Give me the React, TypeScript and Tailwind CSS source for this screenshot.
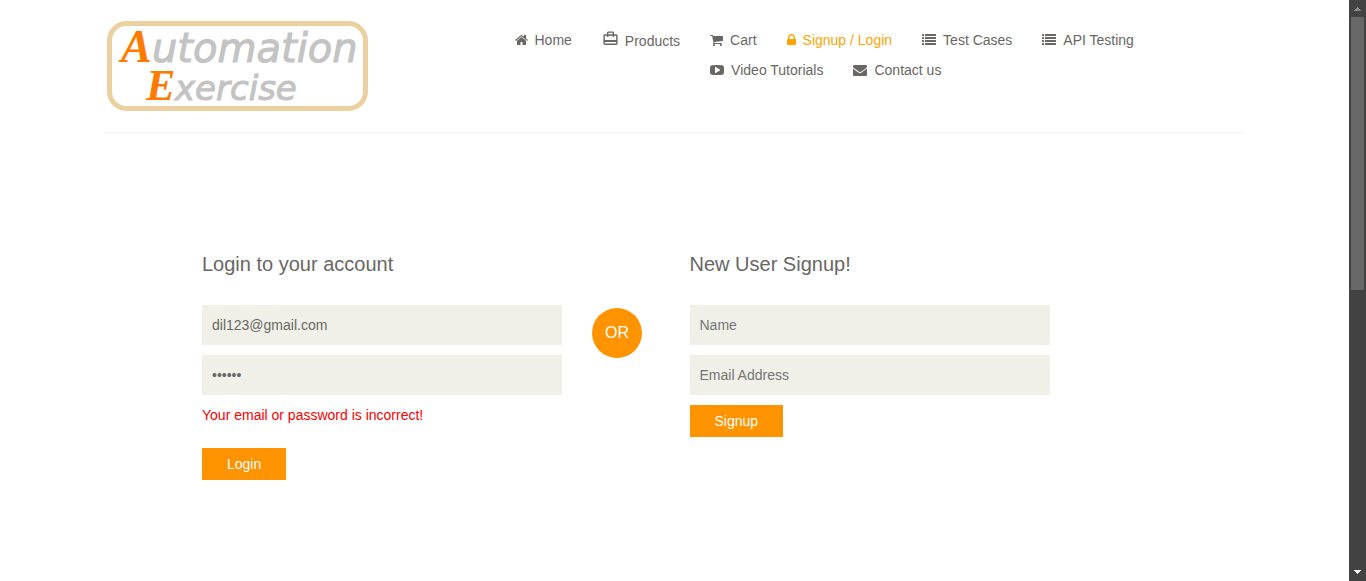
import React from "react";
import { MdCardTravel } from "react-icons/md";

type GlyphProps = { className: string; viewBox?: string; children: React.ReactNode };

function Glyph({ className, viewBox = "0 0 1792 1792", children }: GlyphProps) {
  return (
    <svg viewBox={viewBox} className={`${className} shrink-0`} fill="currentColor" aria-hidden="true">
      {children}
    </svg>
  );
}

const HomeIcon = () => (
  <Glyph className="h-3.5 w-[13px]" viewBox="64 0 1664 1792">
    <path d="M1472 992v480q0 26-19 45t-45 19h-384v-384h-256v384h-384q-26 0-45-19t-19-45v-480q0-1 .5-3t.5-3l575-474 575 474q1 2 1 6zm223-69l-62 74q-8 9-21 11h-3q-13 0-21-7l-692-577-692 577q-12 8-24 7-13-2-21-11l-62-74q-8-10-7-23.5t11-21.5l719-599q32-26 76-26t76 26l244 204v-195q0-14 9-23t23-9h192q14 0 23 9t9 23v408l219 182q10 8 11 21.5t-7 23.5z" />
  </Glyph>
);

const CartIcon = () => (
  <Glyph className="h-3.5 w-[13px]" viewBox="64 0 1664 1792">
    <path d="M704 1536q0 52-38 90t-90 38-90-38-38-90 38-90 90-38 90 38 38 90zm896 0q0 52-38 90t-90 38-90-38-38-90 38-90 90-38 90 38 38 90zm128-1088v512q0 24-16.5 42.5t-40.5 21.5l-1044 122q13 60 13 70 0 16-24 64h920q26 0 45 19t19 45-19 45-45 19h-1024q-26 0-45-19t-19-45q0-11 8-31.5t16-36 21.5-40 15.5-29.5l-177-823h-204q-26 0-45-19t-19-45 19-45 45-19h256q16 0 28.5 6.5t19.5 15.5 13 24.5 8 26 5.5 29.5 4.5 26h1201q26 0 45 19t19 45z" />
  </Glyph>
);

const LockIcon = () => (
  <Glyph className="h-3.5 w-[9px]" viewBox="320 0 1152 1792">
    <path d="M640 768h512v-192q0-106-75-181t-181-75-181 75-75 181v192zm832 96v576q0 40-28 68t-68 28h-960q-40 0-68-28t-28-68v-576q0-40 28-68t68-28h32v-192q0-184 132-316t316-132 316 132 132 316v192h32q40 0 68 28t28 68z" />
  </Glyph>
);

const ListIcon = () => (
  <Glyph className="size-3.5">
    {[128, 512, 896, 1280].map((y) => (
      <React.Fragment key={y}>
        <rect x="0" y={y} width="256" height="256" rx="32" />
        <rect x="384" y={y} width="1408" height="256" rx="32" />
      </React.Fragment>
    ))}
  </Glyph>
);

const VideoIcon = () => (
  <Glyph className="size-3.5">
    <path d="M1280 896q0-37-30-54l-512-320q-31-20-65-2-33 18-33 56v640q0 38 33 56 16 8 31 8 20 0 34-10l512-320q30-17 30-54zm512 0q0 96-1 150t-8.5 136.5-22.5 147.5q-16 73-69 123t-124 58q-222 25-671 25t-671-25q-71-8-124.5-58t-69.5-123q-14-65-21.5-147.5t-8.5-136.5-1-150 1-150 8.5-136.5 22.5-147.5q16-73 69-123t124-58q222-25 671-25t671 25q71 8 124.5 58t69.5 123q14 65 21.5 147.5t8.5 136.5 1 150z" />
  </Glyph>
);

const MailIcon = () => (
  <Glyph className="size-3.5">
    <path d="M1792 710v794q0 66-47 113t-113 47h-1472q-66 0-113-47t-47-113v-794q44 49 101 87 362 246 497 345 57 42 92.5 65.5t94.5 48 110 24.5h2q51 0 110-24.5t94.5-48 92.5-65.5q170-123 498-345 57-39 100-87zm0-294q0 79-49 151t-122 123q-376 261-468 325-10 7-42.5 31t-54 38.5-52 32.5-57.5 27-50 9h-2q-23 0-50-9t-57.5-27-52-32.5-54-38.5-42.5-31q-91-64-262-182.5t-205-142.5q-62-42-117-115.5t-55-136.5q0-78 41.5-130t118.5-52h1472q65 0 112.5 47t47.5 113z" />
  </Glyph>
);

const wrappingLinks = [
  { label: "Cart", Icon: CartIcon },
  { label: "Signup / Login", Icon: LockIcon, active: true },
  { label: "Test Cases", Icon: ListIcon },
  { label: "API Testing", Icon: ListIcon },
  { label: "Video Tutorials", Icon: VideoIcon },
  { label: "Contact us", Icon: MailIcon },
];

function Logo() {
  return (
    <a href="#home" className="ml-0.5 block w-[262px]">
      <svg viewBox="0 0 262 90" className="block h-auto w-full overflow-visible" role="img" aria-label="Automation Exercise">
        <rect x="2.5" y="2.5" width="256" height="85" rx="17" fill="none" stroke="#ebd0a0" strokeWidth="5" />
        <g fontStyle="italic" fill="#c3c3c3" stroke="#c3c3c3" strokeWidth="1" fontFamily="'DejaVu Sans', sans-serif" fontSize="40">
          <text x="14" y="41">
            <tspan fill="#ff7b00" stroke="none" fontFamily="'Liberation Serif', serif" fontWeight="bold" fontSize="46">A</tspan>
            <tspan x="45">utomation</tspan>
          </text>
          <text x="39" y="79">
            <tspan fill="#ff7b00" stroke="none" fontFamily="'Liberation Serif', serif" fontWeight="bold" fontSize="44">E</tspan>
            <tspan x="68" fontSize="34">xercise</tspan>
          </text>
        </g>
      </svg>
    </a>
  );
}

function Field({ label, ...rest }: { label: string } & React.InputHTMLAttributes<HTMLInputElement>) {
  return (
    <input
      aria-label={label}
      placeholder={label}
      className="mb-2.5 block h-10 w-full bg-[#f0f0e9] px-2.5 text-sm text-[#696763] outline-none placeholder:text-[#757575]"
      {...rest}
    />
  );
}

function SubmitButton({ children }: { children: React.ReactNode }) {
  return (
    <button type="submit" className="block h-8 bg-[#ff9300] px-[25px] text-sm font-medium text-white">
      {children}
    </button>
  );
}

function Header() {
  return (
    <header className="mx-auto w-full max-w-[1170px] px-[15px]">
      <div className="flex items-start border-b border-[#f5f5f5] pt-[21px] pb-[21px]">
        <div className="w-1/3 shrink-0">
          <Logo />
        </div>
        <nav className="flex grow items-start gap-[30px] pt-1 pl-[30px] text-sm leading-[30px] text-[#696763]">
          <a href="#home" className="flex shrink-0 items-center gap-[7px]">
            <HomeIcon />
            Home
          </a>
          <a href="#products" className="flex shrink-0 items-center gap-1.5 pt-px">
            <MdCardTravel className="mb-1.5 size-[17px]" aria-hidden="true" />
            Products
          </a>
          <ul className="flex grow basis-0 flex-wrap gap-x-[30px]">
            {wrappingLinks.map(({ label, Icon, active }) => (
              <li key={label}>
                <a href="#" className={active ? "flex items-center gap-[7px] text-[#ffa500]" : "flex items-center gap-[7px]"}>
                  <Icon />
                  {label}
                </a>
              </li>
            ))}
          </ul>
        </nav>
      </div>
    </header>
  );
}

function Scrollbar() {
  return (
    <div className="sticky top-0 flex h-screen w-[17px] shrink-0 flex-col items-center bg-[#424242]" aria-hidden="true">
      <svg viewBox="0 0 17 17" className="size-[17px] shrink-0" fill="#8a8a8a" shapeRendering="crispEdges">
        <path d="M8 7h1v1h1v1h1v1h1v1H5v-1h1V9h1V8h1z" />
      </svg>
      <div className="h-[47%] w-[13px] bg-[#686868]" />
      <svg viewBox="0 0 17 17" className="mt-auto size-[17px] shrink-0" fill="#ffffff" shapeRendering="crispEdges">
        <path d="M5 6h7v1h-1v1h-1v1H9v1H8V9H7V8H6V7H5z" />
      </svg>
    </div>
  );
}

export default function App() {
  const stay = (e: React.FormEvent) => e.preventDefault();
  return (
    <div className="flex min-h-screen bg-white font-['Liberation_Sans',Arial,sans-serif] text-[#696763]">
      <div className="min-w-0 grow">
        <Header />
        <main className="mx-auto grid w-full max-w-[1170px] grid-cols-12 pt-[117px] pb-20">
          <section className="col-span-4 col-start-2 px-[15px]">
            <h2 className="mb-[27px] text-xl leading-7">Login to your account</h2>
            <form onSubmit={stay}>
              <Field label="Email Address" type="email" defaultValue="dil123@gmail.com" />
              <Field label="Password" type="password" defaultValue="dil123" />
              <p className="mb-[23px] text-sm leading-5 text-[#ff0000]">Your email or password is incorrect!</p>
              <SubmitButton>Login</SubmitButton>
            </form>
          </section>
          <div className="px-[15px] pt-[58px]">
            <div className="flex size-[50px] items-center justify-center rounded-full bg-[#ff9300] text-base text-white">
              OR
            </div>
          </div>
          <section className="col-span-4 px-[15px]">
            <h2 className="mb-[27px] text-xl leading-7">New User Signup!</h2>
            <form onSubmit={stay}>
              <Field label="Name" type="text" />
              <Field label="Email Address" type="email" />
              <SubmitButton>Signup</SubmitButton>
            </form>
          </section>
        </main>
      </div>
      <Scrollbar />
    </div>
  );
}
